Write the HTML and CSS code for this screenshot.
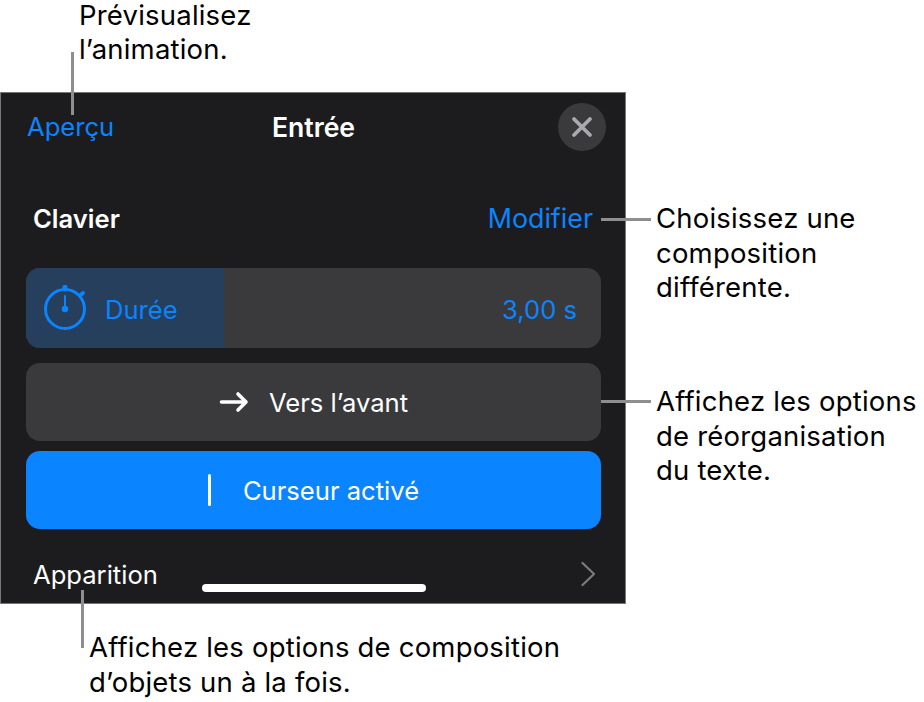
FILE: index.html
```html
<!DOCTYPE html>
<html lang="fr">
<head>
<meta charset="utf-8">
<title>Entrée</title>
<link rel="stylesheet" href="styles.css">
</head>
<body>
<main class="figure">
  <section class="panel">
    <header class="nav">
      <span class="link nav-link">Aperçu</span>
      <strong class="nav-title">Entrée</strong>
      <span class="close">
        <svg viewBox="0 0 24 24" width="24" height="24"><path d="M4 4 20 20M20 4 4 20" fill="none" stroke="#a9a9ae" stroke-width="3.8" stroke-linecap="round"/></svg>
      </span>
    </header>
    <div class="build">
      <strong class="build-name">Clavier</strong>
      <span class="link link-large">Modifier</span>
    </div>
    <div class="duration">
      <div class="fill">
        <svg class="watch" viewBox="0 0 46 46" width="46" height="46"><g fill="none" stroke="#0a84ff"><circle cx="23" cy="24" r="19.500" stroke-width="3"/><path d="M23 4V2.300" stroke-width="5" stroke-linecap="round"/><path d="M38.500 10 41 8" stroke-width="4" stroke-linecap="round"/><path d="M23 25V11" stroke-width="2" stroke-linecap="round"/></g><circle cx="23" cy="24" r="3.300" fill="#0a84ff"/></svg>
        <span class="duration-text">Durée</span>
      </div>
      <span class="value duration-text">3,00 s</span>
    </div>
    <div class="btn">
      <svg class="arrow" viewBox="0 0 30 22" width="30" height="22"><path d="M2.500 11H27M19 3 27 11 19 19" fill="none" stroke="#fff" stroke-width="3.600" stroke-linecap="round" stroke-linejoin="round"/></svg>
      <span>Vers l’avant</span>
    </div>
    <div class="btn btn-on">
      <i class="caret"></i>
      <span>Curseur activé</span>
    </div>
    <div class="row">
      <span>Apparition</span>
      <svg viewBox="0 0 16 26" width="16" height="26"><path d="M2.500 2 14 13 2.500 24" fill="none" stroke="#7c7c80" stroke-width="2.200" stroke-linecap="round" stroke-linejoin="round"/></svg>
    </div>
    <i class="home"></i>
  </section>

  <div class="note note-preview"><span>Prévisualisez</span><span>l’animation.</span></div>
  <p class="note note-change">Choisissez une<br>composition<br>différente.</p>
  <p class="note note-flow">Affichez les options<br>de réorganisation<br>du texte.</p>
  <p class="note note-object">Affichez les options de composition<br>d’objets un à la fois.</p>

  <i class="lead lead-v lead-preview"></i>
  <i class="lead lead-h lead-change"></i>
  <i class="lead lead-h lead-flow"></i>
  <i class="lead lead-v lead-object"></i>
</main>
</body>
</html>
```
FILE: styles.css
```css
* { box-sizing: border-box; }
html, body { margin: 0; background: #fff; }
body { font-family: Inter, "Liberation Sans", sans-serif; }

.figure { position: relative; width: 924px; height: 702px; padding-top: 92px; overflow: hidden; }

.panel {
  position: relative;
  width: 626px;
  height: 512px;
  background: #1c1c1e;
  border: 1px solid #77777a;
  color: #fff;
  font-size: 25.6px;
  display: flex;
  flex-direction: column;
  padding: 0 24px 0 25px;
}

.link { color: #0a84ff; }
.link-large { font-size: 26.8px; }
.nav-link { margin-left: 1px; }

.nav { height: 67px; flex: none; display: flex; align-items: center; justify-content: space-between; }
.nav-title { font-weight: 600; font-size: 26.6px; position: absolute; left: 1px; right: 0; text-align: center; pointer-events: none; }
.close {
  width: 48px; height: 48px; margin-right: -5px; border-radius: 50%;
  background: #3a3a3c; display: flex; align-items: center; justify-content: center;
}

.build { height: 50px; line-height: 50px; margin-top: 33px; padding: 0 8px 0 7px; flex: none; display: flex; align-items: baseline; justify-content: space-between; }
.build-name { font-weight: 600; }

.duration {
  height: 80px; margin-top: 25px; flex: none;
  background: #3a3a3c; border-radius: 14px; overflow: hidden;
  display: flex; align-items: center; justify-content: space-between;
  color: #0a84ff;
}
.duration-text { padding-top: 2px; }
.fill { width: 198px; height: 100%; background: #253f5c; display: flex; align-items: center; padding-left: 16px; gap: 17px; }
.value { padding-right: 24px; }

.btn {
  height: 78px; flex: none; margin-top: 15px;
  background: #3a3a3c; border-radius: 14px;
  display: flex; align-items: center; justify-content: center; gap: 20px;
}
.btn-on { margin-top: 10px; background: #0a84ff; gap: 32px; }
.arrow { flex: none; }
.caret { width: 3px; height: 32px; background: #fff; border-radius: 2px; }

.row { height: 50px; margin-top: 20px; padding: 0 5px 0 7px; flex: none; display: flex; align-items: center; justify-content: space-between; }

.home { position: absolute; left: 201px; top: 491px; width: 224px; height: 8px; background: #fff; border-radius: 4px; }

.note { position: absolute; margin: 0; color: #000; font-size: 27.5px; letter-spacing: 0.2px; line-height: 34.5px; white-space: nowrap; }
.note-preview { left: 79px; top: 0; display: flex; flex-direction: column; gap: 3px; line-height: 31px; }
.note-change { left: 656px; top: 201px; }
.note-flow { left: 656px; top: 384px; }
.note-object { left: 89px; top: 630px; }

.lead { position: absolute; background: #8e8e90; }
.lead-v { width: 3px; }
.lead-h { height: 3px; }
.lead-preview { left: 71px; top: 52px; height: 63px; }
.lead-change { left: 601px; top: 218px; width: 50px; }
.lead-flow { left: 601px; top: 400px; width: 50px; }
.lead-object { left: 81px; top: 590px; height: 58px; }
```
